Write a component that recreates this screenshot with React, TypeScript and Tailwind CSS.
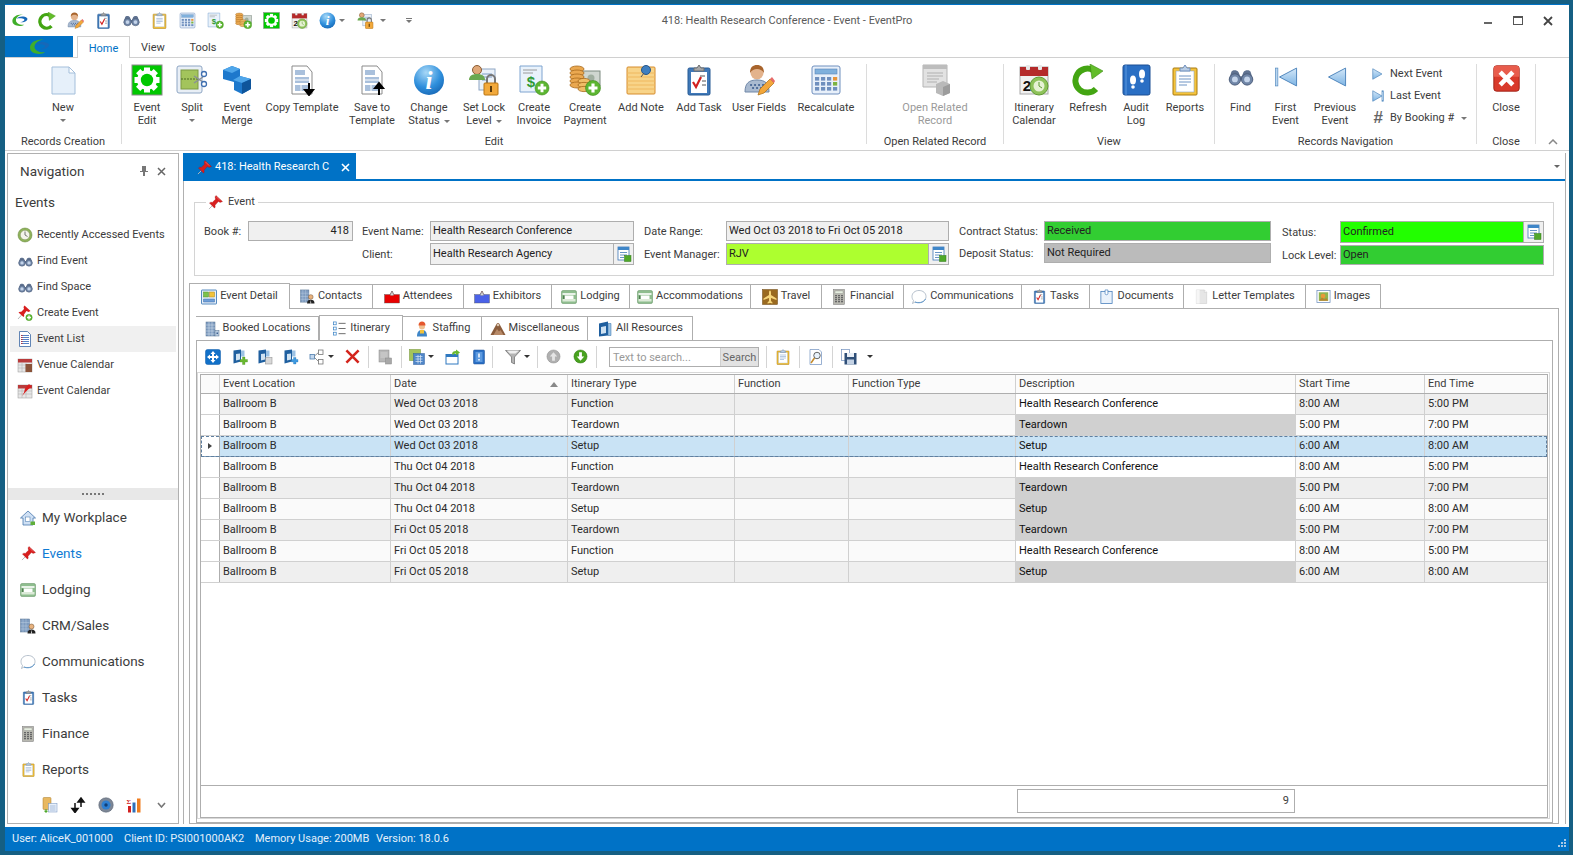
import type { ReactNode } from 'react'

const Ico = ({ s = 32, children }: { s?: number; children: ReactNode }) => (
  <svg width={s} height={s} viewBox="0 0 32 32" className="shrink-0">{children}</svg>
)
type P = { s?: number }

// ── Large ribbon icons ─────────────────────────────────────────────────────
const NewDoc = ({ s }: P) => (
  <Ico s={s}>
    <path d="M5 3h17l6 6v21H5z" fill="#e6f0fa" stroke="#a4bfdb" />
    <path d="M22 3v6h6z" fill="#fff" stroke="#a4bfdb" />
  </Ico>
)
const Gear = ({ s }: P) => (
  <Ico s={s}>
    <rect x="1" y="1" width="30" height="30" fill="#00c800" stroke="#8a8a8a" />
    {[0, 45, 90, 135].map((a) => (
      <rect key={a} x="13" y="3.5" width="6" height="25" fill="#fff" transform={`rotate(${a} 16 16)`} />
    ))}
    <circle cx="16" cy="16" r="10" fill="#fff" />
    <circle cx="16" cy="16" r="6.2" fill="#00c800" />
  </Ico>
)
const Split = ({ s }: P) => (
  <Ico s={s}>
    <rect x="1" y="2" width="25" height="27" rx="2" fill="#e9eff6" stroke="#8ea6c4" />
    <rect x="5" y="6" width="17" height="19" fill="#a3c45c" stroke="#7d9a43" />
    <path d="M5 15h17" stroke="#4d6a22" strokeDasharray="2 1" />
    <path d="M18 12l9 6M18 19l9-6" stroke="#8a8f98" strokeWidth="1.5" />
    <circle cx="28" cy="10" r="2.5" fill="#fff" stroke="#3f6fb0" strokeWidth="1.3" />
    <circle cx="28" cy="20" r="2.5" fill="#fff" stroke="#3f6fb0" strokeWidth="1.3" />
  </Ico>
)
const Merge = ({ s }: P) => (
  <Ico s={s}>
    <path d="M2 6l9-4 8 3v7l11 3v10l-9 5-8-4v-8L2 15z" fill="#1d78cc" />
    <path d="M2 6l9-4 8 3-8 4zM19 12l11 3-9 4-9-3z" fill="#4fa6ea" />
    <path d="M21 19l9-4v10l-9 5z" fill="#0f559b" />
  </Ico>
)
const Template = ({ s, up }: P & { up?: boolean }) => (
  <Ico s={s}>
    <path d="M6 2h15l5 6v22H6z" fill="#fff" stroke="#8a8a8a" />
    <path d="M9 6h10v5H9zM9 13h14v6H9zM9 21h14v6H9z" fill="#a9c0dc" />
    <path d="M9 16h14M15 21v6" stroke="#fff" />
    {up ? (
      <path d="M23 31V21M19 24l4-5 4 5z" stroke="#000" strokeWidth="2" fill="#000" />
    ) : (
      <path d="M23 19v9M19 26l4 5 4-5z" stroke="#000" strokeWidth="2" fill="#000" />
    )}
  </Ico>
)
const Info = ({ s }: P) => (
  <Ico s={s}>
    <defs>
      <radialGradient id="infoG" cx="0.4" cy="0.25" r="0.9">
        <stop offset="0" stopColor="#a7d8f7" />
        <stop offset="0.55" stopColor="#2f8fdc" />
        <stop offset="1" stopColor="#0f5aa8" />
      </radialGradient>
    </defs>
    <circle cx="16" cy="16" r="15" fill="url(#infoG)" />
    <text x="16" y="25" textAnchor="middle" fontFamily="Liberation Serif" fontStyle="italic" fontWeight="700" fontSize="25" fill="#fff">i</text>
  </Ico>
)
const LockDoc = ({ s }: P) => (
  <Ico s={s}>
    <rect x="11" y="5" width="16" height="21" fill="#eaf1f9" stroke="#8ea6c4" />
    <path d="M14 10h10M14 13h10M14 16h6" stroke="#7d9cc4" />
    <circle cx="9" cy="6" r="4.5" fill="#e0a878" stroke="#8a5c34" />
    <path d="M1 16c0-4 3-6 8-6s8 2 8 6z" fill="#6aa84f" />
    <path d="M19 19v-4a4 4 0 018 0v4" fill="none" stroke="#777" strokeWidth="2" />
    <rect x="16" y="19" width="14" height="12" rx="1" fill="#f2a93b" stroke="#b97412" />
    <rect x="22" y="22" width="2" height="6" fill="#5b3a0a" />
  </Ico>
)
const PlusBadge = ({ x = 24, y = 24, r = 7 }: { x?: number; y?: number; r?: number }) => (
  <g>
    <circle cx={x} cy={y} r={r} fill="#5cb531" stroke="#3e8a1c" strokeWidth="0.6" />
    <path d={`M${x - r * 0.6} ${y}h${r * 1.2}M${x} ${y - r * 0.6}v${r * 1.2}`} stroke="#fff" strokeWidth={r * 0.42} />
  </g>
)
const Invoice = ({ s }: P) => (
  <Ico s={s}>
    <path d="M2 2h22v26H2z" fill="#e9f2fb" stroke="#7ea4d0" />
    <path d="M5 6h14M5 9h10" stroke="#9a9a9a" />
    <text x="13" y="23" textAnchor="middle" fontFamily="Liberation Sans" fontWeight="700" fontSize="15" fill="#2f9a35">$</text>
    <PlusBadge />
  </Ico>
)
const Payment = ({ s }: P) => (
  <Ico s={s}>
    <rect x="11" y="7" width="20" height="15" fill="#cfd6d0" stroke="#7d8a80" />
    <circle cx="22" cy="14" r="3.5" fill="#9fae9f" />
    {[5, 9, 13, 17, 21].map((y) => (
      <ellipse key={y} cx="8" cy={y} rx="7" ry="3" fill="#eaa850" stroke="#a86a1c" strokeWidth="0.8" />
    ))}
    {[17, 21, 25].map((y) => (
      <ellipse key={y} cx="15" cy={y} rx="6" ry="2.6" fill="#f0bd66" stroke="#a86a1c" strokeWidth="0.8" />
    ))}
    <PlusBadge r={7.5} />
  </Ico>
)
const Note = ({ s }: P) => (
  <Ico s={s}>
    <rect x="2" y="3" width="28" height="27" rx="1" fill="#f8d489" stroke="#d68c2c" />
    <path d="M2 9h28M2 13h28M2 17h28M2 21h28M2 25h28" stroke="#efb85f" />
    <circle cx="21" cy="6" r="4.5" fill="#3f7fc0" stroke="#26568a" />
    <path d="M19 9l-3 4" stroke="#555" />
  </Ico>
)
const TaskClip = ({ s }: P) => (
  <Ico s={s}>
    <rect x="5" y="4" width="22" height="27" rx="1.5" fill="#3f78b8" stroke="#275a94" />
    <rect x="8" y="8" width="16" height="21" fill="#fff" />
    <path d="M11 6V4h3l2-3 2 3h3v3H11z" fill="#a6a6a6" stroke="#6e6e6e" />
    <path d="M10 18l3 5 5-10" fill="none" stroke="#d21f1f" strokeWidth="2.2" />
    <path d="M17 12h5M19 17h4M19 21h4" stroke="#555" />
  </Ico>
)
const UserEdit = ({ s }: P) => (
  <Ico s={s}>
    <circle cx="14" cy="9" r="6.5" fill="#e3b38c" />
    <path d="M7 9c0-6 3-8 7-8s7 2 7 8c-2-3-4-4-7-4s-5 1-7 4z" fill="#a8642c" />
    <path d="M2 28c0-9 4-12 12-12s12 3 12 12z" fill="#a9bad0" stroke="#7088a8" />
    <path d="M8 21h.1M12 21h.1M16 21h.1M20 21h.1M10 24h.1M14 24h.1M18 24h.1" stroke="#3f5f90" strokeWidth="2" strokeLinecap="round" />
    <path d="M15 31l2-6 10-10 4 4-10 10z" fill="#f3a73b" stroke="#a96b14" strokeWidth="0.7" />
    <path d="M27 15l4 4 1-2-3-4z" fill="#e86a6a" />
  </Ico>
)
const Calc = ({ s }: P) => (
  <Ico s={s}>
    <rect x="2" y="2" width="28" height="28" rx="2" fill="#e8f0fa" stroke="#6f8fbe" />
    <rect x="5" y="5" width="22" height="5" fill="#7fb0dc" stroke="#5a86b8" strokeWidth="0.6" />
    {[13, 18, 23].map((y) =>
      [5, 11, 17, 23].map((x) => (
        <rect key={`${x}-${y}`} x={x} y={y} width="4.2" height="3.6" fill={x === 23 && y === 13 ? '#e8943a' : x === 23 && y === 18 ? '#7cb342' : '#6f8fbe'} />
      ))
    )}
  </Ico>
)
const OpenRelated = ({ s }: P) => (
  <Ico s={s}>
    <path d="M4 1h24v22H4z" fill="#e2e2e2" stroke="#b5b5b5" />
    <path d="M4 1h24v4H4z" fill="#bdbdbd" />
    <path d="M8 9h16M8 12h16M8 15h12M8 18h10" stroke="#b0b0b0" />
    <path d="M17 20l7-3 7 3v9l-7 3-7-3z" fill="#b9b9b9" />
    <path d="M24 23l7-3v9l-7 3z" fill="#9c9c9c" />
  </Ico>
)
const ItinCal = ({ s }: P) => (
  <Ico s={s}>
    <rect x="2" y="3" width="28" height="27" fill="#f0f0f0" stroke="#aaa" />
    <path d="M2 3h28v9H2z" fill="#b42a2a" />
    <rect x="8" y="1" width="4" height="5" rx="1" fill="#e8e8e8" />
    <rect x="20" y="1" width="4" height="5" rx="1" fill="#e8e8e8" />
    <text x="9" y="27" textAnchor="middle" fontFamily="Liberation Sans" fontWeight="700" fontSize="15" fill="#111">2</text>
    <circle cx="21" cy="22" r="9" fill="#8ec25a" stroke="#5f9a32" />
    <circle cx="21" cy="22" r="5.5" fill="#e6f2d4" />
    <path d="M21 18v4l3 2" stroke="#5f9a32" fill="none" />
  </Ico>
)
const Refresh = ({ s }: P) => (
  <Ico s={s}>
    <path d="M24 25A12 12 0 1 1 21 6" fill="none" stroke="#43a512" strokeWidth="6" />
    <path d="M18 0l13 7-11 8z" fill="#63bd2a" stroke="#3c8c12" strokeWidth="0.6" />
  </Ico>
)
const Audit = ({ s }: P) => (
  <Ico s={s}>
    <rect x="3" y="1" width="27" height="30" rx="2" fill="#2a6fc4" stroke="#1b4f94" />
    <path d="M6 1v30" stroke="#5d9adf" />
    <ellipse cx="13" cy="16" rx="3" ry="4.5" fill="#fff" />
    <ellipse cx="13" cy="23" rx="1.8" ry="1.8" fill="#fff" />
    <ellipse cx="22" cy="10" rx="3" ry="4.5" fill="#fff" />
    <ellipse cx="22" cy="17" rx="1.8" ry="1.8" fill="#fff" />
  </Ico>
)
const ReportsIco = ({ s }: P) => (
  <Ico s={s}>
    <rect x="4" y="4" width="24" height="27" rx="1" fill="#f5c33b" stroke="#a87a10" />
    <rect x="7" y="7" width="18" height="21" fill="#fff" stroke="#8ea6c4" strokeWidth="0.6" />
    <path d="M10 12h12M10 15h12M10 18h12M10 21h8" stroke="#6f94c4" />
    <path d="M11 7V4h3l2-3 2 3h3v3z" fill="#b9cde4" stroke="#6f8fbe" />
  </Ico>
)
const Binoc = ({ s }: P) => (
  <Ico s={s}>
    <path d="M4 10c1-3 7-3 9 0l2 5h2l2-5c2-3 8-3 9 0l3 10H1z" fill="#5f7290" />
    <circle cx="8.5" cy="19" r="7" fill="#6f85a6" stroke="#465672" />
    <circle cx="23.5" cy="19" r="7" fill="#6f85a6" stroke="#465672" />
    <circle cx="8.5" cy="19" r="3.6" fill="#c4d4ea" />
    <circle cx="23.5" cy="19" r="3.6" fill="#c4d4ea" />
  </Ico>
)
const Tri = ({ s, d, bar }: P & { d: 'l' | 'r'; bar?: boolean }) => (
  <Ico s={s}>
    <defs>
      <linearGradient id="triG" x1="0" y1="0" x2="0" y2="1">
        <stop offset="0" stopColor="#d5e8f8" />
        <stop offset="1" stopColor="#7db4e4" />
      </linearGradient>
    </defs>
    {d === 'l' ? (
      <>
        {bar && <rect x="3" y="5" width="3" height="22" fill="#b9d6f0" stroke="#4f86bc" strokeWidth="0.8" />}
        <path d="M29 5v22L8 16z" fill="url(#triG)" stroke="#4f86bc" strokeWidth="1.2" />
      </>
    ) : (
      <>
        <path d="M4 4v24l21-12z" fill="url(#triG)" stroke="#4f86bc" strokeWidth="1.6" />
        {bar && <rect x="25" y="4" width="4" height="24" fill="#b9d6f0" stroke="#4f86bc" strokeWidth="1.2" />}
      </>
    )}
  </Ico>
)
const CloseRed = ({ s }: P) => (
  <Ico s={s}>
    <rect x="2" y="2" width="28" height="28" rx="3" fill="#d93a2b" stroke="#9c1f14" />
    <path d="M2 5a3 3 0 013-3h22a3 3 0 013 3v9H2z" fill="#e85c4c" />
    <path d="M9 9l14 14M23 9L9 23" stroke="#fff" strokeWidth="5" />
  </Ico>
)
const Pin = ({ s }: P) => (
  <Ico s={s}>
    <path d="M2 30l10-10" stroke="#b8b8b8" strokeWidth="2" />
    <path d="M17 1l14 13-5 2-4-2-7 8c1 3 0 5-1 6L3 17c2-2 4-2 6-1l7-7-1-5z" fill="#d81e1e" stroke="#9c1010" strokeWidth="0.6" />
    <path d="M18 4l8 8" stroke="#f47a7a" strokeWidth="1.5" />
  </Ico>
)

// ── Small icons ────────────────────────────────────────────────────────────
const Logo = ({ s }: P) => (
  <Ico s={s}>
    <path d="M4 17c0-7 8-12 18-11-7 1-12 5-12 10 0 4 6 8 14 7-5 4-20 3-20-6z" fill="#3fae2a" />
    <path d="M11 13c4-4 12-5 18-1 2 3-4 8-12 7 5-1 8-3 7-5-3-2-9-2-13-1z" fill="#1668b8" />
  </Ico>
)
const ClockRing = ({ s }: P) => (
  <Ico s={s}>
    <circle cx="16" cy="16" r="14" fill="#8fb35a" stroke="#5f7f34" />
    <circle cx="16" cy="16" r="9.5" fill="#f4f4ea" stroke="#7f8f5a" />
    <path d="M16 9v7l5 3" fill="none" stroke="#555" strokeWidth="1.6" />
  </Ico>
)
const PinPlus = ({ s }: P) => (
  <Ico s={s}>
    <path d="M2 28l8-9" stroke="#b8b8b8" strokeWidth="2" />
    <path d="M15 1l12 11-4 2-4-2-5 7c1 3 0 4-1 5L3 15c2-2 4-2 5-1l6-6-1-4z" fill="#d81e1e" />
    <PlusBadge x={24} y={25} r={6.5} />
  </Ico>
)
const ListDoc = ({ s }: P) => (
  <Ico s={s}>
    <path d="M5 1h16l6 6v24H5z" fill="#fff" stroke="#2f5f9f" strokeWidth="1.5" />
    <path d="M8 9h16M8 13h16M8 17h16M8 21h16M8 25h16" stroke="#2a62b8" strokeWidth="1.6" />
    <path d="M8 9h3M8 13h3M8 17h3M8 21h3M8 25h3" stroke="#c22" strokeWidth="1.6" />
  </Ico>
)
const CalSmall = ({ s, alt }: P & { alt?: boolean }) => (
  <Ico s={s}>
    <rect x="2" y="4" width="28" height="26" fill="#e6e6e6" stroke="#999" />
    <path d="M2 4h28v7H2z" fill="#b93a3a" />
    <path d="M2 16h28M2 22h28M10 11v19M18 11v19" stroke="#aaa" />
    {alt ? (
      <path d="M10 26l4-7 2-8 8-9 5 5-8 7-3 3z" fill="#d81e1e" />
    ) : (
      <rect x="17" y="14" width="13" height="16" fill="#8a5238" />
    )}
  </Ico>
)
const Home = ({ s }: P) => (
  <Ico s={s}>
    <path d="M16 2L1 16h5v14h20V16h5z" fill="#cfe0f4" stroke="#3f70a8" strokeWidth="1.5" />
    <rect x="11" y="14" width="9" height="9" fill="#fff" stroke="#3f70a8" />
    <rect x="21" y="23" width="9" height="7" fill="#5fae3a" />
  </Ico>
)
const Bed = ({ s }: P) => (
  <Ico s={s}>
    <rect x="1" y="3" width="30" height="26" rx="3" fill="#8ebd8e" stroke="#5d8f5d" />
    <rect x="3" y="8" width="26" height="4" fill="#e8f2e8" />
    <rect x="7" y="13" width="18" height="7" fill="#fff" />
    <path d="M3 20h26v5H3z" fill="#dcead8" />
    <rect x="4" y="13" width="3" height="7" fill="#4f7f4f" />
  </Ico>
)
const Crm = ({ s }: P) => (
  <Ico s={s}>
    <rect x="1" y="2" width="18" height="26" fill="#7f9cc0" stroke="#54708f" />
    <path d="M6 2v26M12 2v26M1 9h18M1 16h18M1 22h18" stroke="#b9cce0" />
    <circle cx="23" cy="17" r="5" fill="#e8b27e" stroke="#6a4a2a" />
    <path d="M15 31c0-6 3-8 8-8s8 2 8 8z" fill="#222" />
    <path d="M23 23l-1 8h2z" fill="#fff" />
  </Ico>
)
const Bubble = ({ s }: P) => (
  <Ico s={s}>
    <path d="M16 3c8 0 14 5 14 12s-6 12-14 12c-3 0-5 0-8-1l-5 3 2-6c-2-2-3-5-3-8C2 8 8 3 16 3z" fill="#fff" stroke="#9aa8b8" strokeWidth="1.4" />
    <path d="M8 26c6 3 17 2 21-6" fill="none" stroke="#3f86c8" strokeWidth="1.6" />
  </Ico>
)
const GrayCalc = ({ s }: P) => (
  <Ico s={s}>
    <rect x="5" y="1" width="22" height="30" fill="#b8b8b0" stroke="#777" />
    <rect x="8" y="4" width="16" height="5" fill="#e6eee0" stroke="#666" strokeWidth="0.5" />
    {[12, 16, 20, 24].map((y) => [8, 14, 20].map((x) => <rect key={`${x}-${y}`} x={x} y={y} width="4" height="2.6" fill="#666" />))}
  </Ico>
)
const Panes = ({ s }: P) => (
  <Ico s={s}>
    <rect x="1" y="2" width="30" height="28" rx="1" fill="#e8f0fa" stroke="#2f6fb0" strokeWidth="1.6" />
    <rect x="5" y="6" width="10" height="10" fill="#7cc24a" stroke="#4f8a2a" />
    <rect x="17" y="6" width="10" height="10" fill="#f2c23b" stroke="#a8861a" />
    <path d="M5 20h22v6H5z" fill="#6f9fd8" stroke="#3f6fa8" />
  </Ico>
)
const Badge = ({ s, c }: P & { c: string }) => (
  <Ico s={s}>
    <path d="M12 12l4-8 4 8" fill="none" stroke="#6a4a4a" strokeWidth="1.6" />
    <rect x="1" y="11" width="30" height="17" fill={c} stroke="#555" strokeWidth="0.8" />
    <rect x="13" y="9" width="6" height="4" fill="#d8d8d8" stroke="#777" strokeWidth="0.6" />
  </Ico>
)
const Plane = ({ s }: P) => (
  <Ico s={s}>
    <rect x="1" y="1" width="30" height="30" fill="#9a6a20" stroke="#6a4510" />
    <path d="M16 3c1.5 0 2 2 2 5v4l11 7v3l-11-4v6l3 3v2l-5-1-5 1v-2l3-3v-6L3 22v-3l11-7V8c0-3 .5-5 2-5z" fill="#f7d67a" />
  </Ico>
)
const Paper = ({ s }: P) => (
  <Ico s={s}>
    <rect x="4" y="5" width="24" height="26" fill="#eaf2fb" stroke="#3f78b8" strokeWidth="1.6" />
    <path d="M13 8V2h6v8c0 3-6 3-6 0z" fill="#fff" stroke="#3f78b8" strokeWidth="1.4" />
  </Ico>
)
const Letter = ({ s }: P) => (
  <Ico s={s}>
    <path d="M5 2h17l5 5v24H5z" fill="#e6e6e6" stroke="#c4c4c4" />
    <path d="M5 2h7v29H5z" fill="#f6f6f6" />
    <path d="M22 2v5h5" fill="#fff" stroke="#c4c4c4" />
  </Ico>
)
const Picture = ({ s }: P) => (
  <Ico s={s}>
    <rect x="2" y="3" width="28" height="26" fill="#fff" stroke="#6f8fbe" strokeWidth="1.6" />
    <rect x="6" y="7" width="20" height="18" fill="#8fb44f" />
    <circle cx="15" cy="15" r="5" fill="#e89a3a" />
    <path d="M6 25l7-7 5 4 4-3 4 6z" fill="#b8842f" />
  </Ico>
)
const Building = ({ s }: P) => (
  <Ico s={s}>
    <rect x="4" y="2" width="18" height="28" fill="#7f9cc0" stroke="#54708f" />
    <path d="M10 2v28M16 2v28M4 8h18M4 14h18M4 20h18M4 26h18" stroke="#dbe6f2" />
    <rect x="22" y="19" width="8" height="11" fill="#b9cce0" stroke="#54708f" />
    <rect x="25" y="23" width="3" height="3" fill="#3f5f90" />
  </Ico>
)
const ItinList = ({ s }: P) => (
  <Ico s={s}>
    <rect x="3" y="2" width="6" height="6" fill="#fff" stroke="#3f86c8" strokeWidth="1.6" />
    <rect x="3" y="13" width="6" height="6" fill="#fff" stroke="#3f86c8" strokeWidth="1.6" />
    <rect x="3" y="24" width="6" height="6" fill="#fff" stroke="#3f86c8" strokeWidth="1.6" />
    <path d="M14 5h15M14 16h15M14 27h15" stroke="#555" strokeWidth="1.8" />
  </Ico>
)
const Staff = ({ s }: P) => (
  <Ico s={s}>
    <circle cx="16" cy="11" r="6" fill="#f0c090" />
    <path d="M9 9c0-5 3-8 7-8s7 3 7 8z" fill="#e4572e" />
    <path d="M6 31c0-10 4-13 10-13s10 3 10 13z" fill="#3f86c8" />
    <path d="M12 18h8v7h-8z" fill="#f2c23b" />
  </Ico>
)
const Mound = ({ s }: P) => (
  <Ico s={s}>
    <path d="M1 28L13 6c2-3 4-3 6 0l12 22z" fill="#8a5c3c" />
    <path d="M7 28l7-12 4 5 3-3 6 10z" fill="#b88a68" />
    <circle cx="16" cy="8" r="2.6" fill="#d9c4ae" />
  </Ico>
)
const Resources = ({ s }: P) => (
  <Ico s={s}>
    <path d="M4 5l18-4v28L4 31z" fill="#1f5f9f" />
    <path d="M22 5h6v24h-6z" fill="#9cc2e4" stroke="#2f6fa8" />
    <path d="M8 12l10-2v14l-10 2z" fill="#cfe2f2" />
  </Ico>
)
const DocAction = ({ s, kind }: P & { kind: 'plus' | 'copy' | 'blue' }) => (
  <Ico s={s}>
    <path d="M3 3l15-2v24l-15 4z" fill="#1f5f9f" />
    <path d="M18 3h7v12h-7z" fill="#9cc2e4" />
    <path d="M8 10l8-1v12l-8 2z" fill="#cfe2f2" />
    {kind === 'plus' && <path d="M21 16h5v5h5v5h-5v5h-5v-5h-5v-5h5z" fill="#6ab82f" stroke="#3e8a1c" strokeWidth="0.6" />}
    {kind === 'copy' && <rect x="17" y="17" width="13" height="13" fill="#d8d8d8" stroke="#888" />}
    {kind === 'blue' && <path d="M21 17h5v4h4v5h-4v4h-5v-4h-4v-5h4z" fill="#3f9ae0" stroke="#1f6fb0" strokeWidth="0.6" />}
  </Ico>
)
const MoveBox = ({ s }: P) => (
  <Ico s={s}>
    <rect x="1" y="1" width="30" height="30" rx="4" fill="#1170c8" stroke="#0c5aa8" />
    <path d="M16 4l5 6h-3v4h4v-3l6 5-6 5v-3h-4v4h3l-5 6-5-6h3v-4h-4v3l-6-5 6-5v3h4v-4h-3z" fill="#fff" />
  </Ico>
)
const Nodes = ({ s }: P) => (
  <Ico s={s}>
    <rect x="19" y="2" width="9" height="9" fill="#fff" stroke="#777" strokeWidth="1.6" />
    <rect x="19" y="21" width="9" height="9" fill="#fff" stroke="#777" strokeWidth="1.6" />
    <rect x="2" y="11" width="9" height="9" fill="#c4d8ee" stroke="#4f7fb0" strokeWidth="1.6" />
    <path d="M11 14l8-7M11 17l8 8" stroke="#777" strokeWidth="1.6" />
  </Ico>
)
const RedX = ({ s }: P) => (
  <Ico s={s}>
    <path d="M3 3l26 26M29 3L3 29" stroke="#d4241c" strokeWidth="5.5" />
  </Ico>
)
const GrayStack = ({ s }: P) => (
  <Ico s={s}>
    <rect x="4" y="2" width="20" height="24" fill="#b8b8b8" stroke="#8a8a8a" />
    <path d="M7 8h14M7 12h14M7 16h14" stroke="#eee" />
    <rect x="17" y="18" width="12" height="12" fill="#a8a8a8" stroke="#888" />
  </Ico>
)
const GridGreen = ({ s }: P) => (
  <Ico s={s}>
    <rect x="1" y="1" width="22" height="22" fill="#a4c45a" stroke="#6f8f2f" />
    <rect x="9" y="9" width="22" height="22" fill="#4f86c8" stroke="#2f5f9f" />
    <path d="M13 15h14M13 20h14M13 25h14M18 12v17M23 12v17" stroke="#dbe8f6" strokeWidth="1.4" />
  </Ico>
)
const Pop = ({ s }: P) => (
  <Ico s={s}>
    <rect x="2" y="11" width="24" height="19" fill="#fff" stroke="#2f78c0" strokeWidth="2" />
    <rect x="2" y="11" width="24" height="5" fill="#2f78c0" />
    <path d="M14 11c0-5 3-7 8-7V1l8 6-8 6v-4c-2 0-4 0-4 2" fill="#6ab82f" />
  </Ico>
)
const BlueBook = ({ s }: P) => (
  <Ico s={s}>
    <rect x="5" y="2" width="22" height="28" rx="2" fill="#2a6fc4" stroke="#1b4f94" />
    <rect x="9" y="6" width="14" height="20" fill="#5d9adf" />
    <path d="M16 9v8M16 20v3" stroke="#fff" strokeWidth="3" />
  </Ico>
)
const Funnel = ({ s }: P) => (
  <Ico s={s}>
    <path d="M1 3h30L19 16v14l-6-3V16z" fill="#b4b4b4" stroke="#555" strokeWidth="1.2" />
    <path d="M4 3h24L21 9H10z" fill="#efefef" />
  </Ico>
)
const RoundArrow = ({ s, down }: P & { down?: boolean }) => (
  <Ico s={s}>
    <circle cx="16" cy="16" r="14" fill={down ? '#48a21f' : '#b0b0b0'} stroke={down ? '#2d7410' : '#8a8a8a'} />
    {down ? (
      <path d="M13 7h6v9h5l-8 9-8-9h5z" fill="#fff" />
    ) : (
      <path d="M13 25v-9H8l8-9 8 9h-5v9z" fill="#e4e4e4" />
    )}
  </Ico>
)
const Magnify = ({ s }: P) => (
  <Ico s={s}>
    <path d="M4 1h18l5 5v25H4z" fill="#fff" stroke="#6f8fbe" strokeWidth="1.4" />
    <circle cx="18" cy="13" r="6.5" fill="#e8f2fb" stroke="#555" strokeWidth="1.8" />
    <path d="M13 18l-7 10" stroke="#c48a2a" strokeWidth="3" />
  </Ico>
)
const Floppy = ({ s }: P) => (
  <Ico s={s}>
    <rect x="1" y="1" width="16" height="22" fill="#fff" stroke="#6f8fbe" strokeWidth="1.4" />
    <rect x="7" y="8" width="24" height="23" fill="#2f4f78" />
    <rect x="12" y="8" width="14" height="8" fill="#e8eef6" />
    <rect x="12" y="21" width="14" height="10" fill="#c4d2e4" />
  </Ico>
)
const FormBtn = () => (
  <Ico s={16}>
    <rect x="4" y="2" width="22" height="26" fill="#fff" stroke="#3f78b8" strokeWidth="1.6" />
    <rect x="4" y="2" width="22" height="6" fill="#3f86c8" />
    <path d="M8 13h14M8 18h14M8 23h8" stroke="#3f78b8" strokeWidth="1.6" />
    <rect x="17" y="19" width="13" height="12" fill="#4fa82a" stroke="#2f7a14" />
  </Ico>
)
const Transfer = ({ s }: P) => (
  <Ico s={s}>
    <path d="M10 30V12M4 23l6 8 6-8z" stroke="#111" strokeWidth="3" fill="#111" />
    <path d="M22 20V3M16 10l6-8 6 8z" stroke="#111" strokeWidth="3" fill="#111" />
  </Ico>
)
const Disc = ({ s }: P) => (
  <Ico s={s}>
    <circle cx="16" cy="16" r="14.5" fill="#7d8796" stroke="#555f6e" />
    <circle cx="16" cy="16" r="9" fill="#2e7fd0" />
    <circle cx="16" cy="16" r="3.5" fill="#123f74" />
  </Ico>
)
const Sigma = ({ s }: P) => (
  <Ico s={s}>
    <text x="1" y="13" fontFamily="Liberation Serif" fontWeight="700" fontSize="14" fill="#d21f1f">Σ</text>
    <rect x="4" y="18" width="6" height="13" fill="#d21f1f" />
    <rect x="13" y="11" width="6" height="20" fill="#2f6fb8" />
    <rect x="22" y="3" width="7" height="28" fill="#ef7d1f" />
  </Ico>
)
const DbDoc = ({ s }: P) => (
  <Ico s={s}>
    <rect x="2" y="1" width="16" height="24" rx="2" fill="#e8b860" stroke="#a87a24" />
    <rect x="13" y="13" width="17" height="17" fill="#e8f0fa" stroke="#6f8fbe" />
    <path d="M16 18h11M16 22h11M16 26h11" stroke="#6f8fbe" />
    <path d="M5 27h6v3H5zM7 24h2v8H7z" fill="#4fa82a" />
  </Ico>
)
const Arrow = ({ c = 'border-t-[#777]' }: { c?: string }) => (
  <span className={`inline-block w-0 h-0 border-x-[3px] border-t-[3px] border-x-transparent ${c}`} />
)

// ── Ribbon ─────────────────────────────────────────────────────────────────
interface RibbonBtnProps {
  w: string
  icon: ReactNode
  lines: string[]
  arrow?: boolean
  disabled?: boolean
}
const RibbonBtn = ({ w, icon, lines, arrow, disabled }: RibbonBtnProps) => (
  <div className={`${w} shrink-0 flex flex-col items-center pt-[6px] leading-[13px] ${disabled ? 'text-[#9a9a9a]' : ''}`}>
    <div className="h-[37px]">{icon}</div>
    {lines.map((l, i) => (
      <div key={l} className="whitespace-nowrap">
        {l}
        {arrow && lines.length > 1 && i === 1 && <span className="ml-[4px] align-middle inline-flex"><Arrow /></span>}
      </div>
    ))}
    {arrow && lines.length === 1 && <div className="h-[13px] flex items-center"><Arrow /></div>}
  </div>
)
const RibbonSep = () => <div className="w-px shrink-0 my-[6px] bg-[#dcdcdc]" />
const Group = ({ w, label, children }: { w: string; label: string; children: ReactNode }) => (
  <div className={`${w} shrink-0 flex flex-col`}>
    <div className="flex flex-1">{children}</div>
    <div className="h-[16px] leading-[15px] text-center whitespace-nowrap">{label}</div>
  </div>
)
const NavSmall = ({ icon, label, arrow }: { icon: ReactNode; label: string; arrow?: boolean }) => (
  <div className="h-[22px] flex items-center gap-[5px]">
    {icon}
    <span className="whitespace-nowrap">{label}</span>
    {arrow && <span className="ml-[2px] inline-flex"><Arrow /></span>}
  </div>
)

const Ribbon = () => (
  <div className="h-[93px] shrink-0 flex border-b border-[#d0d0d0]">
    <Group w="w-[116px]" label="Records Creation">
      <RibbonBtn w="w-[116px]" icon={<NewDoc />} lines={['New']} arrow />
    </Group>
    <RibbonSep />
    <Group w="w-[744px]" label="Edit">
      <RibbonBtn w="w-[50px]" icon={<Gear />} lines={['Event', 'Edit']} />
      <RibbonBtn w="w-[40px]" icon={<Split />} lines={['Split']} arrow />
      <RibbonBtn w="w-[50px]" icon={<Merge />} lines={['Event', 'Merge']} />
      <RibbonBtn w="w-[80px]" icon={<Template />} lines={['Copy Template']} />
      <RibbonBtn w="w-[60px]" icon={<Template up />} lines={['Save to', 'Template']} />
      <RibbonBtn w="w-[54px]" icon={<Info />} lines={['Change', 'Status']} arrow />
      <RibbonBtn w="w-[56px]" icon={<LockDoc />} lines={['Set Lock', 'Level']} arrow />
      <RibbonBtn w="w-[44px]" icon={<Invoice />} lines={['Create', 'Invoice']} />
      <RibbonBtn w="w-[58px]" icon={<Payment />} lines={['Create', 'Payment']} />
      <RibbonBtn w="w-[54px]" icon={<Note />} lines={['Add Note']} />
      <RibbonBtn w="w-[62px]" icon={<TaskClip />} lines={['Add Task']} />
      <RibbonBtn w="w-[58px]" icon={<UserEdit />} lines={['User Fields']} />
      <RibbonBtn w="w-[76px]" icon={<Calc />} lines={['Recalculate']} />
    </Group>
    <RibbonSep />
    <Group w="w-[136px]" label="Open Related Record">
      <RibbonBtn w="w-[136px]" icon={<OpenRelated />} lines={['Open Related', 'Record']} disabled />
    </Group>
    <RibbonSep />
    <Group w="w-[210px]" label="View">
      <RibbonBtn w="w-[60px]" icon={<ItinCal />} lines={['Itinerary', 'Calendar']} />
      <RibbonBtn w="w-[48px]" icon={<Refresh />} lines={['Refresh']} />
      <RibbonBtn w="w-[48px]" icon={<Audit />} lines={['Audit', 'Log']} />
      <RibbonBtn w="w-[50px]" icon={<ReportsIco />} lines={['Reports']} />
    </Group>
    <RibbonSep />
    <Group w="w-[261px]" label="Records Navigation">
      <RibbonBtn w="w-[51px]" icon={<Binoc s={26} />} lines={['Find']} />
      <RibbonBtn w="w-[39px]" icon={<Tri s={26} d="l" bar />} lines={['First', 'Event']} />
      <RibbonBtn w="w-[60px]" icon={<Tri s={26} d="l" />} lines={['Previous', 'Event']} />
      <div className="pl-[6px] pt-[5px]">
        <NavSmall icon={<Tri s={14} d="r" />} label="Next Event" />
        <NavSmall icon={<Tri s={14} d="r" bar />} label="Last Event" />
        <NavSmall
          icon={<span className="w-[14px] text-center font-['Liberation_Sans',sans-serif] font-bold italic text-[17px] text-[#666]">#</span>}
          label="By Booking #"
          arrow
        />
      </div>
    </Group>
    <RibbonSep />
    <Group w="w-[58px]" label="Close">
      <RibbonBtn w="w-[58px]" icon={<CloseRed s={29} />} lines={['Close']} />
    </Group>
    <RibbonSep />
    <div className="flex-1 flex items-end justify-center pb-[5px]">
      <svg width="10" height="6" viewBox="0 0 10 6"><path d="M1 5l4-4 4 4" fill="none" stroke="#888" strokeWidth="1.5" /></svg>
    </div>
  </div>
)

// ── Title bar ──────────────────────────────────────────────────────────────
const quick = [
  <Logo s={19} />, <Refresh s={18} />, <UserEdit s={17} />, <TaskClip s={17} />, <Binoc s={17} />, <ReportsIco s={17} />,
  <Calc s={17} />, <Invoice s={17} />, <Payment s={17} />, <Gear s={17} />, <ItinCal s={17} />, <Info s={17} />,
]
const TitleBar = () => (
  <div className="h-[31px] shrink-0 grid grid-cols-[1fr_auto_1fr] items-center">
    <div className="flex items-center">
      {quick.map((q, i) => (
        <div key={i} className="w-[28px] flex justify-center">{q}</div>
      ))}
      <span className="-ml-[2px] inline-flex"><Arrow /></span>
      <div className="ml-[12px]"><LockDoc s={17} /></div>
      <span className="ml-[6px] inline-flex"><Arrow /></span>
      <div className="ml-[20px] flex flex-col items-center gap-[1px]">
        <div className="w-[6px] h-px bg-[#777]" />
        <Arrow />
      </div>
    </div>
    <div className="pt-[2px] text-[#5a5a5a] whitespace-nowrap">418: Health Research Conference - Event - EventPro</div>
    <div className="flex justify-end pr-[6px] items-center">
      <div className="w-[30px] flex justify-center"><div className="w-[8px] h-[2px] mt-[4px] bg-[#666]" /></div>
      <div className="w-[30px] flex justify-center"><div className="w-[10px] h-[9px] border border-t-[2px] border-[#555]" /></div>
      <div className="w-[30px] flex justify-center">
        <svg width="10" height="10" viewBox="0 0 10 10"><path d="M1 1l8 8M9 1L1 9" stroke="#444" strokeWidth="1.8" /></svg>
      </div>
    </div>
  </div>
)

const RibbonTabs = () => (
  <div className="h-[22px] shrink-0 flex border-b border-[#d0d0d0]">
    <div className="w-[68px] h-[21px] bg-[#0072c6] flex items-center justify-center"><Logo s={24} /></div>
    <div className="ml-[4px] w-[53px] h-[22px] pt-[3px] bg-white border-x border-t border-[#d0d0d0] text-[#0072c6] flex items-center justify-center">Home</div>
    <div className="w-[46px] pt-[3px] flex items-center justify-center">View</div>
    <div className="w-[54px] pt-[3px] flex items-center justify-center">Tools</div>
  </div>
)

// ── Navigation ─────────────────────────────────────────────────────────────
const navItems: { icon: ReactNode; label: string; active?: boolean }[] = [
  { icon: <ClockRing s={16} />, label: 'Recently Accessed Events' },
  { icon: <Binoc s={15} />, label: 'Find Event' },
  { icon: <Binoc s={15} />, label: 'Find Space' },
  { icon: <PinPlus s={16} />, label: 'Create Event' },
  { icon: <ListDoc s={16} />, label: 'Event List', active: true },
  { icon: <CalSmall s={16} />, label: 'Venue Calendar' },
  { icon: <CalSmall s={16} alt />, label: 'Event Calendar' },
]
const bigNav: { icon: ReactNode; label: string; blue?: boolean }[] = [
  { icon: <Home s={16} />, label: 'My Workplace' },
  { icon: <Pin s={15} />, label: 'Events', blue: true },
  { icon: <Bed s={16} />, label: 'Lodging' },
  { icon: <Crm s={16} />, label: 'CRM/Sales' },
  { icon: <Bubble s={16} />, label: 'Communications' },
  { icon: <TaskClip s={15} />, label: 'Tasks' },
  { icon: <GrayCalc s={16} />, label: 'Finance' },
  { icon: <ReportsIco s={15} />, label: 'Reports' },
]
const NavPanel = () => (
  <div className="w-[172px] shrink-0 border border-[#b0b0b0] flex flex-col">
    <div className="h-[34px] shrink-0 flex items-center pl-[12px] pr-[12px]">
      <span className="text-[13.5px]">Navigation</span>
      <svg className="ml-auto mr-[9px]" width="8" height="10" viewBox="0 0 8 10"><path d="M2 0h4v5h2v1H5v4H3V6H0V5h2z" fill="#777" /></svg>
      <svg width="9" height="9" viewBox="0 0 9 9"><path d="M1 1l7 7M8 1L1 8" stroke="#666" strokeWidth="1.5" /></svg>
    </div>
    <div className="h-[28px] shrink-0 flex items-center pl-[7px] text-[13.5px]">Events</div>
    <div className="mt-[6px] shrink-0">
      {navItems.map((n) => (
        <div key={n.label} className={`mx-[2px] h-[26px] flex items-center pl-[7px] gap-[4px] whitespace-nowrap ${n.active ? 'bg-[#f0f0f0]' : ''}`}>
          <div className="w-[16px] flex justify-center">{n.icon}</div>
          {n.label}
        </div>
      ))}
    </div>
    <div className="flex-1" />
    <div className="h-[12px] shrink-0 bg-[#e8e8e8] flex items-center justify-center">
      <div className="w-[22px] border-t-2 border-dotted border-[#777]" />
    </div>
    {bigNav.map((n) => (
      <div key={n.label} className={`h-[36px] pb-[1px] shrink-0 flex items-center pl-[12px] gap-[6px] text-[13.5px] ${n.blue ? 'text-[#0f7bd4]' : ''}`}>
        <div className="w-[16px] flex justify-center">{n.icon}</div>
        {n.label}
      </div>
    ))}
    <div className="h-[35px] shrink-0 flex items-center pl-[28px] pb-[2px]">
      <div className="w-[28px] flex justify-center"><DbDoc s={16} /></div>
      <div className="w-[28px] flex justify-center"><Transfer s={16} /></div>
      <div className="w-[28px] flex justify-center"><Disc s={16} /></div>
      <div className="w-[28px] flex justify-center"><Sigma s={16} /></div>
      <div className="w-[26px] flex justify-center">
        <svg width="9" height="6" viewBox="0 0 9 6"><path d="M1 1l3.5 4L8 1" fill="none" stroke="#777" strokeWidth="1.6" /></svg>
      </div>
    </div>
  </div>
)

// ── Event header form ──────────────────────────────────────────────────────
const Field = ({ className, children, btn, right }: { className: string; children?: ReactNode; btn?: boolean; right?: boolean }) => (
  <div className={`flex self-start items-center border border-[#aeaeae] text-[#222] ${className}`}>
    <span className={`flex-1 px-[2px] pt-[1px] whitespace-nowrap ${right ? 'text-right pr-[3px]' : ''}`}>{children}</span>
    {btn && (
      <div className="w-[20px] self-stretch bg-[#f0f0f0] border-l border-[#aeaeae] flex items-center justify-center"><FormBtn /></div>
    )}
  </div>
)
const Lbl = ({ children, className = '' }: { children: ReactNode; className?: string }) => (
  <div className={`whitespace-nowrap self-start leading-[22px] ${className}`}>{children}</div>
)
const EventForm = () => (
  <fieldset className="ml-[10px] mr-[11px] border border-[#d4d4d4] h-[82px] shrink-0">
    <legend className="ml-[11px] px-[2px] h-[16px] flex items-center gap-[4px]">
      <Pin s={15} />
      <span className="px-[1px]">Event</span>
    </legend>
    <div className="mt-[11px] grid grid-cols-[9px_44px_105px_9px_68px_204px_10px_82px_223px_10px_85px_227px_11px_58px_204px] grid-rows-[22px_22px]">
      <div />
      <Lbl>Book #:</Lbl>
      <Field className="h-[20px] bg-[#f0f0f0]" right>418</Field>
      <div />
      <Lbl>Event Name:</Lbl>
      <Field className="h-[20px] bg-[#f0f0f0]">Health Research Conference</Field>
      <div />
      <Lbl>Date Range:</Lbl>
      <Field className="h-[20px] bg-[#f0f0f0]">Wed Oct 03 2018 to Fri Oct 05 2018</Field>
      <div />
      <Lbl>Contract Status:</Lbl>
      <Field className="h-[20px] bg-[#32cd32]">Received</Field>
      <div />
      <Lbl className="mt-[1px]">Status:</Lbl>
      <Field className="h-[22px] bg-[#22ff00]" btn>Confirmed</Field>
      <div />
      <div />
      <div />
      <div />
      <Lbl className="mt-[1px]">Client:</Lbl>
      <Field className="h-[22px] bg-[#f0f0f0]" btn>Health Research Agency</Field>
      <div />
      <Lbl className="mt-[1px]">Event Manager:</Lbl>
      <Field className="h-[22px] bg-[#adff2f]" btn>RJV</Field>
      <div />
      <Lbl>Deposit Status:</Lbl>
      <Field className="h-[20px] bg-[#bbbbbb]">Not Required</Field>
      <div />
      <Lbl className="mt-[2px]">Lock Level:</Lbl>
      <Field className="mt-[2px] h-[20px] bg-[#32cd32]">Open</Field>
    </div>
  </fieldset>
)

// ── Tabs ───────────────────────────────────────────────────────────────────
const Tab = ({ w, icon, label, active }: { w: string; icon: ReactNode; label: string; active?: boolean }) => (
  <div
    className={`${w} shrink-0 flex items-center justify-center gap-[3px] whitespace-nowrap border-t border-r border-[#aeaeae] ${
      active ? 'h-[26px] -mb-px bg-white border-l' : 'h-[24px]'
    }`}
  >
    {icon}
    {label}
  </div>
)

// ── Grid ───────────────────────────────────────────────────────────────────
const cols = 'grid-cols-[19px_171px_177px_167px_114px_167px_280px_129px_123px]'
const rows = [
  ['Wed Oct 03 2018', 'Function', 'Health Research Conference', '8:00 AM', '5:00 PM'],
  ['Wed Oct 03 2018', 'Teardown', 'Teardown', '5:00 PM', '7:00 PM'],
  ['Wed Oct 03 2018', 'Setup', 'Setup', '6:00 AM', '8:00 AM'],
  ['Thu Oct 04 2018', 'Function', 'Health Research Conference', '8:00 AM', '5:00 PM'],
  ['Thu Oct 04 2018', 'Teardown', 'Teardown', '5:00 PM', '7:00 PM'],
  ['Thu Oct 04 2018', 'Setup', 'Setup', '6:00 AM', '8:00 AM'],
  ['Fri Oct 05 2018', 'Teardown', 'Teardown', '5:00 PM', '7:00 PM'],
  ['Fri Oct 05 2018', 'Function', 'Health Research Conference', '8:00 AM', '5:00 PM'],
  ['Fri Oct 05 2018', 'Setup', 'Setup', '6:00 AM', '8:00 AM'],
]
const Cell = ({ children, className = '' }: { children?: ReactNode; className?: string }) => (
  <div className={`px-[3px] flex items-center whitespace-nowrap border-r border-[#d0d0d0] ${className}`}>{children}</div>
)
const ItineraryGrid = () => (
  <div className="mr-[2px] mb-[3px] pl-[2px] pr-[1px] pt-[1px] flex-1 flex flex-col border border-[#d8d8d8] min-h-0">
    <div className="flex-1 flex flex-col border border-[#aeaeae] min-h-0">
      <div className={`grid ${cols} h-[19px] shrink-0 border-b border-[#aeaeae] bg-[#fbfbfb]`}>
        <Cell />
        <Cell>Event Location</Cell>
        <Cell className="justify-between">
          Date
          <span className="mr-[6px] w-0 h-0 border-x-[4px] border-b-[5px] border-x-transparent border-b-[#888]" />
        </Cell>
        <Cell>Itinerary Type</Cell>
        <Cell>Function</Cell>
        <Cell>Function Type</Cell>
        <Cell>Description</Cell>
        <Cell>Start Time</Cell>
        <Cell className="border-r-0">End Time</Cell>
      </div>
      {rows.map((r, i) => {
        const sel = i === 2
        const bg = sel ? 'bg-[#c9e3f5]' : i % 2 === 0 ? 'bg-[#efefef]' : 'bg-[#fafafa]'
        const desc = sel ? '' : r[1] === 'Function' ? 'bg-white' : 'bg-[#d0d0d0]'
        return (
          <div
            key={i}
            className={`grid ${cols} h-[21px] shrink-0 border-b text-[#2b2b2b] ${bg} ${sel ? 'border-b-[#7f9db9] outline-1 -outline-offset-1 outline-dashed outline-[#5f7f9f]' : 'border-[#d0d0d0]'}`}
          >
            <Cell className="bg-white border-r-[#aeaeae] justify-center px-0">
              {sel && <span className="w-0 h-0 border-y-[3px] border-l-[4px] border-y-transparent border-l-[#444]" />}
            </Cell>
            <Cell>Ballroom B</Cell>
            <Cell>{r[0]}</Cell>
            <Cell>{r[1]}</Cell>
            <Cell />
            <Cell />
            <Cell className={`text-[#111] ${desc}`}>{r[2]}</Cell>
            <Cell>{r[3]}</Cell>
            <Cell className="border-r-0">{r[4]}</Cell>
          </div>
        )
      })}
      <div className="flex-1" />
      <div className="h-[32px] shrink-0 border-t border-[#aeaeae] pl-[816px] pt-[3px]">
        <div className="w-[278px] h-[24px] border border-[#aeaeae] flex items-center justify-end pr-[5px]">9</div>
      </div>
    </div>
  </div>
)

const TbSep = ({ className = '' }: { className?: string }) => <div className={`w-px h-[22px] bg-[#d4d4d4] shrink-0 ${className}`} />
const Tb = ({ w, children }: { w: string; children: ReactNode }) => (
  <div className={`${w} shrink-0 flex items-center justify-center gap-[3px]`}>{children}</div>
)
const Toolbar = () => (
  <div className="h-[31px] shrink-0 flex items-center pl-[3px]">
    <Tb w="w-[26px]"><MoveBox s={16} /></Tb>
    <Tb w="w-[27px]"><DocAction s={16} kind="plus" /></Tb>
    <Tb w="w-[24px]"><DocAction s={16} kind="copy" /></Tb>
    <Tb w="w-[27px]"><DocAction s={16} kind="blue" /></Tb>
    <Tb w="w-[34px]"><Nodes s={16} /><Arrow c="border-t-[#333]" /></Tb>
    <Tb w="w-[28px]"><RedX s={15} /></Tb>
    <TbSep className="ml-[2px]" />
    <Tb w="w-[32px]"><GrayStack s={16} /></Tb>
    <TbSep />
    <Tb w="w-[38px]"><GridGreen s={16} /><Arrow c="border-t-[#333]" /></Tb>
    <Tb w="w-[26px]"><Pop s={16} /></Tb>
    <Tb w="w-[26px]"><BlueBook s={16} /></Tb>
    <TbSep />
    <Tb w="w-[44px] pl-[4px]"><Funnel s={16} /><Arrow c="border-t-[#333]" /></Tb>
    <TbSep />
    <Tb w="w-[31px]"><RoundArrow s={15} /></Tb>
    <Tb w="w-[22px]"><RoundArrow s={15} down /></Tb>
    <TbSep className="ml-[5px] mr-[12px]" />
    <div className="w-[150px] h-[20px] shrink-0 flex border border-[#aeaeae] leading-[19px]">
      <span className="flex-1 pl-[3px] text-[#999] whitespace-nowrap">Text to search...</span>
      <span className="w-[38px] bg-[#e2e2e2] border-l border-[#d0d0d0] text-center text-[#666]">Search</span>
    </div>
    <TbSep className="ml-[7px]" />
    <Tb w="w-[32px]"><ReportsIco s={16} /></Tb>
    <TbSep />
    <Tb w="w-[32px]"><Magnify s={16} /></Tb>
    <TbSep />
    <Tb w="w-[32px]"><Floppy s={16} /></Tb>
    <span className="ml-[2px] inline-flex"><Arrow c="border-t-[#333]" /></span>
  </div>
)

export default function App() {
  return (
    <div className="w-screen h-screen overflow-hidden bg-[#155f83] pt-[4px] pl-[5px] pr-[4px] pb-[4px] font-['Roboto',sans-serif] text-[11px] text-[#3c3c3c]">
      <div className="h-full flex flex-col bg-white border-t border-[#0072c6]">
        <TitleBar />
        <RibbonTabs />
        <Ribbon />
        <div className="flex-1 min-h-0 flex pl-[2px] pt-[2px] pb-[3px] gap-[4px]">
          <NavPanel />
          <div className="w-[1383px] shrink-0 flex flex-col border-x border-[#b0b0b0]">
            <div className="h-[28px] shrink-0 flex border-b-2 border-[#0072c6]">
              <div className="w-[173px] -ml-px h-[28px] bg-[#0072c6] text-white flex items-center pl-[14px] gap-[3px]">
                <Pin s={15} />
                <span className="w-[113px] whitespace-nowrap">418: Health Research C</span>
                <svg className="ml-[10px]" width="9" height="9" viewBox="0 0 9 9"><path d="M1 1l7 7M8 1L1 8" stroke="#fff" strokeWidth="1.6" /></svg>
              </div>
              <div className="ml-auto mr-[5px] flex items-center"><Arrow c="border-t-[#666]" /></div>
            </div>
            <div className="h-[13px] shrink-0" />
            <EventForm />
            <div className="ml-[5px] mr-[6px] mt-[6px] flex-1 min-h-0 flex flex-col">
              <div className="flex items-end h-[26px] shrink-0 relative">
                <Tab w="w-[101px]" icon={<Panes s={16} />} label="Event Detail" active />
                <Tab w="w-[83px]" icon={<Crm s={15} />} label="Contacts" />
                <Tab w="w-[91px]" icon={<Badge s={16} c="#e80000" />} label="Attendees" />
                <Tab w="w-[88px]" icon={<Badge s={16} c="#4a62e8" />} label="Exhibitors" />
                <Tab w="w-[78px]" icon={<Bed s={16} />} label="Lodging" />
                <Tab w="w-[121px]" icon={<Bed s={16} />} label="Accommodations" />
                <Tab w="w-[71px]" icon={<Plane s={16} />} label="Travel" />
                <Tab w="w-[82px]" icon={<GrayCalc s={16} />} label="Financial" />
                <Tab w="w-[118px]" icon={<Bubble s={16} />} label="Communications" />
                <Tab w="w-[68px]" icon={<TaskClip s={15} />} label="Tasks" />
                <Tab w="w-[94px]" icon={<Paper s={15} />} label="Documents" />
                <Tab w="w-[122px]" icon={<Letter s={15} />} label="Letter Templates" />
                <Tab w="w-[75px]" icon={<Picture s={15} />} label="Images" />
              </div>
              <div className="flex-1 min-h-0 flex flex-col border-x border-y border-[#aeaeae] pl-[6px] pr-[5px]">
                <div className="flex items-end h-[31px] shrink-0">
                  <Tab w="w-[123px]" icon={<Building s={16} />} label="Booked Locations" />
                  <Tab w="w-[84px]" icon={<ItinList s={15} />} label="Itinerary" active />
                  <Tab w="w-[79px]" icon={<Staff s={16} />} label="Staffing" />
                  <Tab w="w-[106px]" icon={<Mound s={16} />} label="Miscellaneous" />
                  <Tab w="w-[105px]" icon={<Resources s={16} />} label="All Resources" />
                </div>
                <div className="flex-1 min-h-0 flex flex-col border border-[#aeaeae]">
                  <Toolbar />
                  <ItineraryGrid />
                </div>
              </div>
            </div>
          </div>
        </div>
        <div className="h-[24px] pt-[1px] shrink-0 bg-[#0072c6] text-[#e4f0fa] flex items-center pl-[7px] relative">
          <span className="w-[112px] whitespace-nowrap">User: AliceK_001000</span>
          <span className="w-[131px] whitespace-nowrap">Client ID: PSI001000AK2</span>
          <span className="w-[121px] whitespace-nowrap">Memory Usage: 200MB</span>
          <span className="whitespace-nowrap">Version: 18.0.6</span>
          <svg className="absolute right-[2px] bottom-[3px]" width="10" height="10" viewBox="0 0 10 10"><path d="M7 1h2v2H7zM4 4h2v2H4zM7 4h2v2H7zM1 7h2v2H1zM4 7h2v2H4zM7 7h2v2H7z" fill="#a8c8e4" /></svg>
        </div>
      </div>
    </div>
  )
}
